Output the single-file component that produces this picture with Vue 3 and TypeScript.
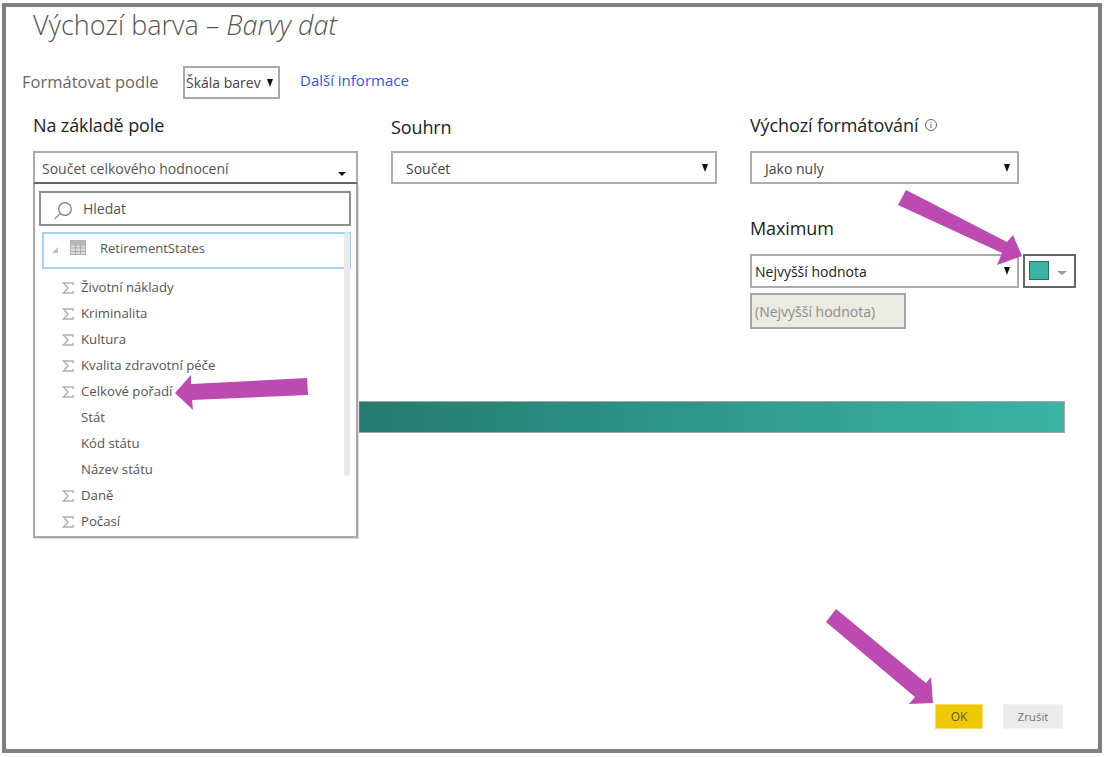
<script setup lang="ts">
interface Field { name: string; sum: boolean }
const fields: Field[] = [
  { name: 'Životní náklady', sum: true },
  { name: 'Kriminalita', sum: true },
  { name: 'Kultura', sum: true },
  { name: 'Kvalita zdravotní péče', sum: true },
  { name: 'Celkové pořadí', sum: true },
  { name: 'Stát', sum: false },
  { name: 'Kód státu', sum: false },
  { name: 'Název státu', sum: false },
  { name: 'Daně', sum: true },
  { name: 'Počasí', sum: true },
]
</script>

<template>
  <div class="page">
    <div class="frame">
      <h1 class="title">Výchozí barva – <em>Barvy dat</em></h1>

      <div class="format-row">
        <span class="format-label">Formátovat podle</span>
        <div class="mini-select">Škála barev<i class="caret"></i></div>
        <a class="more">Další informace</a>
      </div>

      <div class="columns">
        <div class="col col-a">
          <div class="label">Na základě pole</div>
          <div class="select field-select">Součet celkového hodnocení<i class="caret wide"></i></div>
          <div class="panel">
            <div class="search">
              <svg width="20" height="22" viewBox="0 0 20 22" fill="none" stroke="#777" stroke-width="1.2">
                <circle cx="12" cy="11" r="6.300" />
                <path d="M7.500 15.500 1.500 21" stroke-width="1.600" stroke="#999" />
              </svg>
              <span>Hledat</span>
            </div>
            <div class="table-row">
              <svg class="expand" width="8" height="8" viewBox="0 0 8 8"><path d="M7 1v6H1z" fill="#c4c4c4" /></svg>
              <svg width="16" height="15" viewBox="0 0 16 15" fill="#fff" stroke="#b0b0b0" stroke-width="1">
                <rect x="0.5" y="0.5" width="15" height="14" fill="#ddd" />
                <path d="M0.5 5h15M0.5 8h15M0.5 11.500h15M5.500 1v14M10.500 1v14" stroke="#aaa" />
                <rect x="0.5" y="0.5" width="15" height="4" fill="#b8b8b8" stroke="none" />
              </svg>
              <span>RetirementStates</span>
            </div>
            <ul class="fields">
              <li v-for="f in fields" :key="f.name" class="field">
                <svg v-if="f.sum" class="sigma" width="12" height="12" viewBox="0 0 12 12" fill="none" stroke="#b0b0b0" stroke-width="1.500">
                  <path d="M11 3V1H1.500L6 6 1.500 11H11V9" />
                </svg>
                <span>{{ f.name }}</span>
              </li>
            </ul>
            <div class="scrollbar"></div>
          </div>
        </div>

        <div class="col col-b">
          <div class="label label-low">Souhrn</div>
          <div class="select sum-select">Součet<i class="caret"></i></div>
        </div>

        <div class="col col-c">
          <div class="label">
            Výchozí formátování
            <svg class="info" width="14" height="14" viewBox="0 0 14 14" fill="none" stroke="#666">
              <circle cx="7" cy="7" r="5.500" />
              <path d="M7 6v4M7 4v1.200" />
            </svg>
          </div>
          <div class="select default-select">Jako nuly<i class="caret"></i></div>
          <div class="label max-label">Maximum</div>
          <div class="max-row">
            <div class="select max-select">Nejvyšší hodnota<i class="caret"></i></div>
            <div class="color-btn"><span class="swatch"></span><i class="caret small"></i></div>
          </div>
          <div class="disabled">(Nejvyšší hodnota)</div>
        </div>
      </div>

      <div class="gradient"></div>

      <div class="footer">
        <button class="btn ok">OK</button>
        <button class="btn cancel">Zrušit</button>
      </div>
    </div>

    <svg class="arrows" width="1107" height="757" viewBox="0 0 1107 757" fill="#bc4ab0">
      <polygon points="175,393 191,375 191,384 307,378 308,395 192,400 193,410" />
      <polygon points="906,190 898,205 1002,253 997,265 1022,256 1013,235 1007,242" />
      <polygon points="836,609 826,622 915,697 909,704 933,703 931,677 926,683" />
    </svg>
  </div>
</template>

<style>
html, body { margin: 0; background: #fff; }
</style>

<style scoped>
.page {
  position: relative;
  width: 1107px;
  height: 757px;
  overflow: hidden;
  font-family: "Open Sans", "Noto Sans", sans-serif;
  color: #333;
}
.frame {
  box-sizing: border-box;
  width: 1100px;
  height: 750px;
  margin: 3px 0 0 2px;
  border: 4px solid #808080;
  display: flex;
  flex-direction: column;
  padding-left: 27px;
}
.title {
  margin: 0;
  height: 38px;
  font-size: 27px;
  line-height: 36px;
  font-weight: 300;
  color: #555;
}
.title em { font-style: italic; }
.format-row {
  margin: 21px 0 0 -11px;
  height: 33px;
  display: flex;
  align-items: center;
}
.format-label {
  width: 161px;
  margin-top: -3px;
  font-size: 16.500px;
  color: #666;
}
.mini-select {
  box-sizing: border-box;
  width: 97px;
  height: 33px;
  border: 2px solid #a8a8a8;
  padding-left: 1px;
  display: flex;
  align-items: center;
  font-size: 14px;
  color: #444;
  position: relative;
}
.mini-select .caret { right: 5px; top: 11px; }
.more {
  margin: -6px 0 0 20px;
  font-size: 15px;
  color: #3355ee;
}
.columns {
  margin-top: 13px;
  display: grid;
  grid-template-columns: 358px 359px 1fr;
  align-items: start;
}
.col { position: relative; }
.label {
  height: 28px;
  line-height: 28px;
  margin-top: -1px;
  font-size: 18px;
  letter-spacing: -0.12px;
  color: #222;
  display: flex;
  align-items: center;
  gap: 6px;
}
.label-low { margin-top: 1px; }
.select {
  box-sizing: border-box;
  height: 33px;
  padding-top: 1px;
  border: 2px solid #ababab;
  display: flex;
  align-items: center;
  font-size: 14px;
  color: #444;
  position: relative;
  background: #fff;
}
.field-select {
  margin-top: 12px;
  width: 325px;
  padding-left: 7px;
  border-bottom-color: #666;
  color: #555;
}
.sum-select {
  margin-top: 10px;
  width: 326px;
  padding-left: 13px;
}
.default-select {
  margin-top: 12px;
  width: 269px;
  padding-left: 13px;
}
.caret {
  position: absolute;
  right: 7px;
  top: 11px;
  width: 0;
  height: 0;
  border-left: 3.500px solid transparent;
  border-right: 3.500px solid transparent;
  border-top: 8px solid #111;
}
.caret.wide {
  right: 10px;
  top: 19px;
  border-left-width: 4.500px;
  border-right-width: 4.500px;
  border-top-width: 4px;
}
.caret.small {
  right: 7px;
  top: 15px;
  border-left-width: 5px;
  border-right-width: 5px;
  border-top: 4px solid #999;
}
.max-label { margin-top: 30px; }
.max-row {
  margin-top: 12px;
  display: flex;
  gap: 4px;
}
.max-select {
  width: 269px;
  height: 34px;
  padding-left: 3px;
  color: #222;
}
.color-btn {
  box-sizing: border-box;
  position: relative;
  width: 53px;
  height: 34px;
  border: 2px solid #666;
  background: #fff;
}
.swatch {
  box-sizing: border-box;
  display: block;
  width: 20px;
  height: 19px;
  margin: 5px 0 0 4px;
  background: #3ab5a5;
  border: 1px solid #2b6f66;
}
.disabled {
  box-sizing: border-box;
  margin-top: 5px;
  width: 156px;
  height: 36px;
  border: 2px solid #a8a8a8;
  background: #ebebe3;
  padding-left: 3px;
  display: flex;
  align-items: center;
  font-size: 14px;
  color: #8c8c8c;
}
.panel {
  box-sizing: border-box;
  position: absolute;
  z-index: 2;
  left: 0;
  top: 72px;
  width: 325px;
  height: 354px;
  background: #fff;
  border: 2px solid #a8a8a8;
  border-top: 0;
  padding: 7px 5px 0 4px;
  box-shadow: 1px 1px 1px #ddd;
}
.search {
  box-sizing: border-box;
  height: 35px;
  border: 2px solid #8f8f8f;
  display: flex;
  align-items: center;
  padding-left: 12px;
  gap: 10px;
  font-size: 14px;
  color: #555;
}
.table-row {
  box-sizing: border-box;
  margin: 6px 0 0 3px;
  height: 37px;
  width: 309px;
  border: 2px solid #a5d2f7;
  display: flex;
  align-items: center;
  padding: 0 0 6px 7px;
  font-size: 13px;
  color: #555;
  position: relative;
}
.expand { margin-right: 11px; margin-top: 4px; }
.table-row span { margin-left: 14px; }
.fields {
  list-style: none;
  margin: 5px 0 0;
  padding: 0;
}
.field {
  height: 26px;
  padding-left: 42px;
  display: flex;
  align-items: center;
  font-size: 13.200px;
  color: #555;
  position: relative;
}
.sigma { position: absolute; left: 23px; top: 8px; }
.scrollbar {
  position: absolute;
  left: 309px;
  top: 48px;
  width: 6px;
  height: 244px;
  border-radius: 3px;
  background: #e9e9e9;
}
.gradient {
  box-sizing: border-box;
  margin-top: 72px;
  width: 1032px;
  height: 32px;
  border: 1px solid #a8a8a8;
  background: linear-gradient(90deg, #1f6e66 0%, #247a70 31%, #3ab5a5 100%);
}
.footer {
  margin-top: auto;
  margin-bottom: 20px;
  display: flex;
  gap: 20px;
  padding-left: 902px;
}
.btn {
  height: 25px;
  border: 1px solid transparent;
  padding: 0;
  font-family: inherit;
  font-size: 12px;
  color: #5a5a2a;
}
.ok { width: 48px; background: #f0c800; border-color: #f3dc6c; }
.cancel { width: 60px; background: #ebebeb; color: #777; border-color: #f2f2f2; font-size: 11.500px; }
.arrows {
  position: absolute;
  left: 0;
  top: 0;
  z-index: 5;
  pointer-events: none;
}
</style>
